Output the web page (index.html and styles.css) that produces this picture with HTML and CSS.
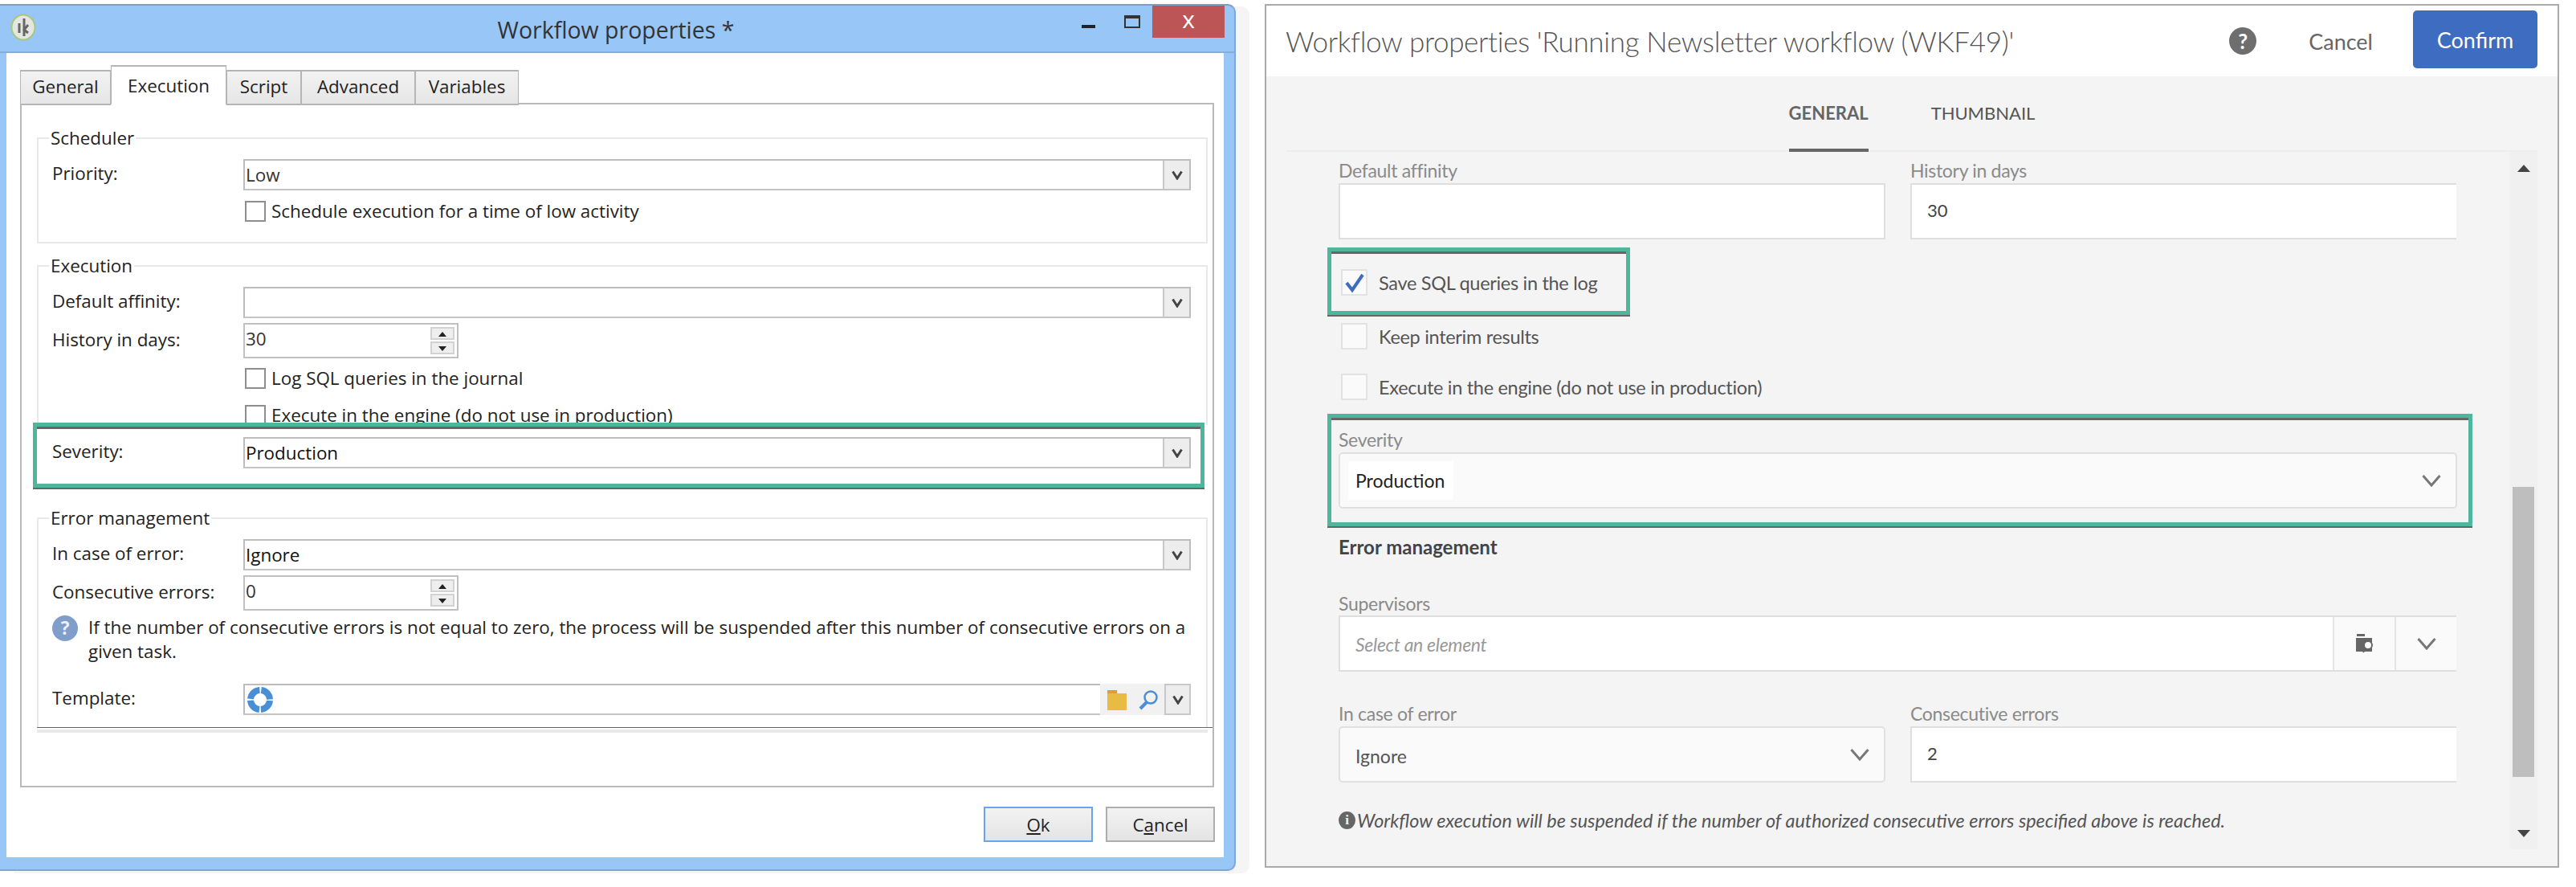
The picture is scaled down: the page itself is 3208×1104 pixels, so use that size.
FILE: index.html
```html
<!DOCTYPE html>
<html lang="en">
<head>
    <meta charset="UTF-8">
    <title>Workflow properties</title>
    <link rel="stylesheet" href="styles.css">
</head>
<body>
    <div class="win">
        <div class="titlebar">
            <div class="app-icon">
                <svg width="32" height="34" viewBox="0 0 32 34"><ellipse cx="16" cy="17" rx="14.5" ry="15.5" fill="#e4e6e2" stroke="#a9c77d" stroke-width="2"/><path d="M17 6v22M11 12v12M22 14l-5 6 5 4" fill="none" stroke="#666" stroke-width="3"/></svg>
            </div>
            <div class="win-title">Workflow properties *</div>
            <div class="win-controls">
                <span class="ctl-min"></span>
                <span class="ctl-max"></span>
                <span class="ctl-close">x</span>
            </div>
        </div>
        <div class="client">
            <div class="tabs">
                <div class="tab">General</div>
                <div class="tab tab-on">Execution</div>
                <div class="tab">Script</div>
                <div class="tab">Advanced</div>
                <div class="tab">Variables</div>
            </div>
            <div class="pane">
                <fieldset class="group">
                    <legend>Scheduler</legend>
                    <div class="row">
                        <label>Priority:</label>
                        <div class="combo"><span class="combo-val">Low</span><span class="combo-btn"><svg class="chev" viewBox="0 0 14 12"><path d="M1.5 1.5L7 10l5.5-8.5" /></svg></span></div>
                    </div>
                    <div class="check-row"><span class="box"></span>Schedule execution for a time of low activity</div>
                </fieldset>
                <fieldset class="group group-exec">
                    <legend>Execution</legend>
                    <div class="row">
                        <label>Default affinity:</label>
                        <div class="combo"><span class="combo-val"></span><span class="combo-btn"><svg class="chev" viewBox="0 0 14 12"><path d="M1.5 1.5L7 10l5.5-8.5" /></svg></span></div>
                    </div>
                    <div class="row row-spin">
                        <label>History in days:</label>
                        <div class="spin"><span class="spin-val">30</span><span class="spin-btns"><i class="up"></i><i class="down"></i></span></div>
                    </div>
                    <div class="check-row"><span class="box"></span>Log SQL queries in the journal</div>
                    <div class="check-row check-cut"><span class="box"></span>Execute in the engine (do not use in production)</div>
                </fieldset>
                <div class="mark mark-left">
                    <div class="row">
                        <label>Severity:</label>
                        <div class="combo"><span class="combo-val val-dark">Production</span><span class="combo-btn"><svg class="chev" viewBox="0 0 14 12"><path d="M1.5 1.5L7 10l5.5-8.5" /></svg></span></div>
                    </div>
                </div>
                <fieldset class="group group-err">
                    <legend>Error management</legend>
                    <div class="row">
                        <label>In case of error:</label>
                        <div class="combo"><span class="combo-val val-dark">Ignore</span><span class="combo-btn"><svg class="chev" viewBox="0 0 14 12"><path d="M1.5 1.5L7 10l5.5-8.5" /></svg></span></div>
                    </div>
                    <div class="row row-spin">
                        <label>Consecutive errors:</label>
                        <div class="spin"><span class="spin-val">0</span><span class="spin-btns"><i class="up"></i><i class="down"></i></span></div>
                    </div>
                    <div class="info">
                        <span class="info-icon">?</span>
                        <p>If the number of consecutive errors is not equal to zero, the process will be suspended after this number of consecutive errors on a given task.</p>
                    </div>
                    <div class="row row-template">
                        <label>Template:</label>
                        <div class="combo">
                            <span class="combo-val template-val">
                                <svg width="34" height="34" viewBox="0 0 34 34"><circle cx="17" cy="17" r="12" fill="none" stroke="#4a8fd6" stroke-width="8" stroke-dasharray="16.85 2" stroke-dashoffset="-1"/></svg>
                            </span>
                            <span class="template-tools">
                                <svg width="26" height="26" viewBox="0 0 26 26"><path d="M1 1h12v5H1z" fill="#e39a3c"/><path d="M1 5h24v21H1z" fill="#e8bb45"/></svg>
                                <svg width="26" height="26" viewBox="0 0 26 26"><circle cx="16" cy="10" r="7.5" fill="none" stroke="#4a8fd6" stroke-width="2.5"/><path d="M11 16L3 24" stroke="#4a8fd6" stroke-width="4"/></svg>
                            </span>
                            <span class="combo-btn"><svg class="chev" viewBox="0 0 14 12"><path d="M1.5 1.5L7 10l5.5-8.5" /></svg></span>
                        </div>
                    </div>
                </fieldset>
                <div class="cut-line"></div>
                <div class="cut-shade"></div>
            </div>
            <div class="dlg-buttons">
                <button class="btn btn-def"><u>O</u>k</button>
                <button class="btn">C<u>a</u>ncel</button>
            </div>
        </div>
    </div>

    <div class="panel">
        <div class="panel-head">
            <div class="panel-title">Workflow properties 'Running Newsletter workflow (WKF49)'</div>
            <span class="help">?</span>
            <span class="head-cancel">Cancel</span>
            <button class="confirm">Confirm</button>
        </div>
        <div class="panel-tabs">
            <div class="ptab ptab-on">GENERAL</div>
            <div class="ptab">THUMBNAIL</div>
        </div>
        <div class="panel-body">
            <div class="form">
                <div class="cols">
                    <div>
                        <div class="flabel">Default affinity</div>
                        <div class="input"></div>
                    </div>
                    <div>
                        <div class="flabel">History in days</div>
                        <div class="input input-open">30</div>
                    </div>
                </div>
                <div class="mark mark-sql">
                    <div class="pcheck"><span class="pbox pbox-on"><svg width="26" height="26" viewBox="0 0 26 26"><path d="M3 13l7 9L23 3" fill="none" stroke="#3d6cc0" stroke-width="4"/></svg></span>Save SQL queries in the log</div>
                </div>
                <div class="pcheck pcheck-keep"><span class="pbox"></span>Keep interim results</div>
                <div class="pcheck pcheck-exec"><span class="pbox"></span>Execute in the engine (do not use in production)</div>
                <div class="mark mark-sev">
                    <div class="flabel">Severity</div>
                    <div class="pselect">
                        <span class="pselect-val">Production</span>
                        <svg class="pchev" viewBox="0 0 24 16"><path d="M1.5 2L12 14 22.5 2"/></svg>
                    </div>
                </div>
                <div class="err-title">Error management</div>
                <div class="flabel label-sup">Supervisors</div>
                <div class="input lookup">
                    <span class="placeholder">Select an element</span>
                    <span class="lookup-btn">
                        <svg width="26" height="26" viewBox="0 0 26 26"><path d="M3 1h10v3H3z" fill="#666"/><path d="M2 6h20v17H2z" fill="#666"/><circle cx="17" cy="15" r="5" fill="#fafafa" stroke="#666" stroke-width="2"/><path d="M14 19l-3 5" stroke="#666" stroke-width="2"/></svg>
                    </span>
                    <span class="lookup-btn lookup-chev"><svg class="pchev" viewBox="0 0 24 16"><path d="M1.5 2L12 14 22.5 2"/></svg></span>
                </div>
                <div class="cols cols-err">
                    <div>
                        <div class="flabel">In case of error</div>
                        <div class="pselect"><span class="ignore">Ignore</span><svg class="pchev" viewBox="0 0 24 16"><path d="M1.5 2L12 14 22.5 2"/></svg></div>
                    </div>
                    <div>
                        <div class="flabel">Consecutive errors</div>
                        <div class="input input-open">2</div>
                    </div>
                </div>
                <div class="note"><span class="note-icon">i</span><em>Workflow execution will be suspended if the number of authorized consecutive errors specified above is reached.</em></div>
            </div>
            <div class="scrollbar">
                <span class="arrow-up"></span>
                <span class="thumb"></span>
                <span class="arrow-down"></span>
            </div>
        </div>
    </div>
</body>
</html>
```

FILE: styles.css
```css
* {
    box-sizing: border-box;
}
html, body {
    margin: 0;
    height: 1104px;
    overflow: hidden;
}
body {
    display: flex;
    align-items: flex-start;
    background: #fff;
    font-family: "Open Sans", sans-serif;
}

/* left: windows dialog */
.win {
    width: 1539px;
    height: 1079px;
    margin-top: 5px;
    background: #98c6f6;
    border-top: 2px solid #7d9cc0;
    border-right: 2px solid #7fa6d6;
    border-bottom: 2px solid #7fa6d6;
    border-top-right-radius: 10px;
    border-bottom-right-radius: 10px;
    display: flex;
    flex-direction: column;
    box-shadow: 17px 3px 0 #f5f5f5;
    font-size: 22.4px;
    color: #222;
}
.titlebar {
    height: 59px;
    flex: none;
    display: grid;
    grid-template-columns: 1fr auto 1fr;
    border-bottom: 2px solid #85aede;
}
.app-icon {
    padding: 10px 0 0 13px;
}
.win-title {
    font-size: 28.5px;
    line-height: 56px;
    color: #333;
    padding: 2px 3px 0 0;
}
.win-controls {
    display: flex;
    justify-content: flex-end;
    align-items: flex-start;
    padding-right: 12px;
}
.ctl-min {
    width: 17px;
    height: 4px;
    background: #222;
    margin-top: 24px;
}
.ctl-max {
    width: 20px;
    height: 16px;
    border: 2px solid #333;
    border-top-width: 4px;
    margin: 12px 15px 0 36px;
}
.ctl-close {
    width: 90px;
    height: 40px;
    background: #bc5656;
    color: #fff;
    font-size: 30px;
    line-height: 34px;
    text-align: center;
}
.client {
    flex: 1;
    margin: 0 13px 15px 8px;
    padding: 16px 11px 17px 17px;
    background: #fff;
    display: flex;
    flex-direction: column;
}
.tabs {
    display: grid;
    grid-template-columns: 113px 144px 93px 142px 129px;
    height: 48px;
    align-items: end;
    margin-bottom: -2px;
    position: relative;
}
.tab {
    height: 44px;
    line-height: 38px;
    text-align: center;
    background: linear-gradient(#f2f2f2, #e6e6e6);
    border: 2px solid #b5b5b5;
    border-left-width: 1px;
    border-right-width: 1px;
}
.tab-on {
    height: 50px;
    background: #fff;
    border-bottom-color: #fff;
    margin-top: -1px;
    line-height: 48px;
}
.pane {
    height: 852px;
    border: 2px solid #b9b9b9;
    margin-right: 1px;
    padding: 28px 6px 0 19px;
}
.group {
    margin: 0;
    padding: 12px 19px 25px 17px;
    border: 2px solid #e8e8e8;
    min-width: 0;
}
.group legend {
    padding: 0 2px;
    margin-left: -4px;
    line-height: 28px;
}
.group-exec {
    margin-top: 14px;
    padding-bottom: 0;
    height: 212px;
    border-bottom: none;
}
.group-err {
    margin-top: 24px;
    padding-top: 12px;
    padding-bottom: 15px;
    border-bottom: none;
}
.row {
    display: flex;
    align-items: center;
}
.row label {
    width: 238px;
    flex: none;
    margin-top: -4px;
}
.combo {
    flex: 1;
    height: 39px;
    display: flex;
    border: 2px solid #bdbdc0;
    border-bottom-color: #c4c4c4;
    background: #fff;
}
.combo-val {
    flex: 1;
    line-height: 36px;
    color: #333;
    padding-left: 1px;
}
.val-dark {
    color: #111;
}
.combo-btn {
    width: 33px;
    background: #ededed;
    border-left: 2px solid #c8c8c8;
    display: flex;
    align-items: center;
    justify-content: center;
}
.chev {
    width: 14px;
    height: 12px;
    fill: none;
    stroke: #444;
    stroke-width: 3;
}
.row-spin {
    margin-top: 6px;
}
.spin {
    width: 268px;
    height: 44px;
    border: 2px solid #c0c0c2;
    display: flex;
    justify-content: space-between;
    padding-right: 3px;
}
.spin-val {
    line-height: 36px;
    color: #333;
    padding-left: 1px;
}
.spin-btns {
    width: 30px;
    display: flex;
    flex-direction: column;
    gap: 2px;
    padding: 3px 0;
}
.spin-btns i {
    flex: 1;
    background: #eee;
    border: 2px solid #d2d2d2;
    position: relative;
}
.spin-btns i::after {
    content: "";
    position: absolute;
    left: 8px;
    top: 4px;
    border-left: 5px solid transparent;
    border-right: 5px solid transparent;
}
.spin-btns .up::after {
    border-bottom: 6px solid #222;
}
.spin-btns .down::after {
    border-top: 6px solid #222;
}
.check-row {
    display: flex;
    align-items: center;
    margin: 13px 0 0 240px;
    height: 26px;
    line-height: 26px;
    white-space: nowrap;
}
.group-exec .check-row {
    margin-top: 12px;
}
.group-exec .check-cut {
    margin-top: 20px;
}
.box {
    width: 26px;
    height: 26px;
    flex: none;
    border: 2px solid #8e8e8e;
    margin-right: 7px;
    background: #fff;
}
.mark {
    border: 5px solid #4fb69e;
    box-shadow: inset 0 3px 0 #666, 0 2px 0 #666;
    position: relative;
}
.mark-left {
    margin: -3px 4px 0 -5px;
    padding: 13px 12px 19px 19px;
    background: #fff;
}
.info {
    display: flex;
    margin-top: 6px;
    line-height: 30px;
    gap: 13px;
}
.info-icon {
    width: 32px;
    height: 32px;
    flex: none;
    border-radius: 50%;
    background: #7f9ec9;
    color: #eef2f8;
    font-weight: 700;
    text-align: center;
    line-height: 32px;
}
.info p {
    margin: 0;
}
.row-template {
    margin-top: 25px;
}
.template-val {
    display: flex;
    align-items: center;
    padding-left: 2px;
}
.template-tools {
    width: 80px;
    margin: -2px 0;
    background: #f1f1f1;
    display: flex;
    align-items: center;
    justify-content: center;
    gap: 13px;
}
.row-template .combo {
    border-right: none;
}
.row-template .combo-btn {
    border: 2px solid #c8c8c8;
    margin: -2px 0;
}
.cut-line {
    height: 1px;
    background: #666;
    margin-right: -6px;
}
.cut-shade {
    height: 4px;
    margin-top: 2px;
    background: #e9e9e9;
}
.dlg-buttons {
    margin-top: 24px;
    display: flex;
    justify-content: flex-end;
    gap: 16px;
}
.btn {
    width: 136px;
    height: 44px;
    font: inherit;
    color: #222;
    background: linear-gradient(#f2f2f2, #e4e4e4);
    border: 2px solid #adadad;
    padding: 0;
}
.btn-def {
    border-color: #65a5ee;
}

/* right: web dialog */
.panel {
    width: 1612px;
    height: 1075px;
    margin: 5px 0 0 36px;
    border: 2px solid #aaa;
    background: #f4f4f4;
    display: flex;
    flex-direction: column;
    font-family: "Lato", sans-serif;
    color: #444;
}
.panel-head {
    height: 88px;
    flex: none;
    background: #fff;
    display: flex;
    align-items: center;
    padding: 0 25px 0 24px;
}
.panel-title {
    flex: 1;
    font-size: 35px;
    font-weight: 300;
    color: #555;
    letter-spacing: -0.33px;
}
.help {
    width: 34px;
    height: 34px;
    border-radius: 50%;
    background: #6e6e6e;
    color: #fff;
    font-size: 26px;
    font-weight: 700;
    line-height: 34px;
    text-align: center;
    margin-right: 65px;
}
.head-cancel {
    font-size: 27px;
    color: #666;
    margin-right: 50px;
}
.confirm {
    width: 155px;
    height: 72px;
    background: #3d6cc0;
    color: #fff;
    font: 27px "Lato", sans-serif;
    border: none;
    border-radius: 5px;
    margin-top: -4px;
    padding: 0;
}
.panel-tabs {
    height: 94px;
    flex: none;
    margin: 0 25px;
    border-bottom: 2px solid #ededed;
    display: flex;
    justify-content: center;
    gap: 78px;
    font-size: 22px;
    color: #555;
}
.ptab {
    line-height: 92px;
    height: 94px;
}
.ptab-on {
    font-weight: 700;
    color: #666;
    border-bottom: 4px solid #666;
}
.panel-body {
    flex: 1;
    display: flex;
    min-height: 0;
}
.form {
    flex: 1;
    padding: 11px 0 0 90px;
    overflow: hidden;
}
.cols {
    display: grid;
    grid-template-columns: 681px 680px;
    gap: 31px;
}
.flabel {
    font-size: 23px;
    line-height: 24px;
    color: #8a8a8a;
    margin-bottom: 4px;
    letter-spacing: -0.3px;
}
.input {
    height: 70px;
    background: #fff;
    border: 2px solid #dedede;
    font-size: 22px;
    line-height: 66px;
    padding-left: 19px;
    color: #444;
}
.input-open {
    border-right: none;
    line-height: 64px;
}
.mark-sql {
    width: 377px;
    margin: 10px 0 0 -14px;
    padding: 22px 0 19px 12px;
}
.mark-sev {
    width: 1426px;
    margin: 17px 0 0 -14px;
    padding: 15px 14px 17px 9px;
}
.pcheck {
    display: flex;
    align-items: center;
    height: 33px;
    font-size: 23.5px;
    color: #555;
    white-space: nowrap;
    letter-spacing: -0.3px;
}
.pcheck-keep {
    margin: 10px 0 0 3px;
}
.pcheck-exec {
    margin: 30px 0 0 3px;
}
.pbox {
    width: 33px;
    height: 33px;
    flex: none;
    margin-right: 14px;
    background: #fafafa;
    border: 2px solid #e2e2e2;
    display: flex;
    align-items: center;
    justify-content: center;
}
.pselect {
    height: 70px;
    background: #fafafa;
    border: 2px solid #e0e0e0;
    border-radius: 5px;
    display: flex;
    align-items: center;
    justify-content: space-between;
    padding: 0 18px 0 10px;
    font-size: 23px;
    color: #222;
}
.pselect-val {
    background: #fff;
    padding: 0 11px 0 9px;
    line-height: 48px;
}
.ignore {
    padding: 4px 0 0 9px;
    color: #555;
}
.pchev {
    width: 24px;
    height: 16px;
    fill: none;
    stroke: #777;
    stroke-width: 3;
}
.err-title {
    margin-top: 14px;
    font-size: 24px;
    line-height: 24px;
    font-weight: 700;
    color: #444;
}
.label-sup {
    margin-top: 46px;
    margin-bottom: 3px;
}
.lookup {
    width: 1392px;
    display: flex;
    padding: 0 0 0 19px;
    border-right: none;
    line-height: 68px;
}
.placeholder {
    flex: 1;
    font-size: 23px;
    font-style: italic;
    color: #999;
    letter-spacing: -0.3px;
}
.lookup-btn {
    width: 77px;
    background: #fafafa;
    border-left: 2px solid #e4e4e4;
    display: flex;
    align-items: center;
    justify-content: center;
}
.cols-err {
    margin-top: 40px;
}
.note {
    margin-top: 33px;
    display: flex;
    align-items: center;
    gap: 2px;
    font-size: 23.4px;
    color: #555;
    white-space: nowrap;
}
.note-icon {
    width: 21px;
    height: 22px;
    flex: none;
    border-radius: 50%;
    background: #666;
    color: #f4f4f4;
    font: 700 17px/22px "Liberation Serif", serif;
    text-align: center;
}
.scrollbar {
    width: 35px;
    height: 868px;
    flex: none;
    margin-right: 25px;
    background: #f0f0f0;
    display: flex;
    flex-direction: column;
    align-items: center;
    position: relative;
}
.arrow-up {
    margin-top: 16px;
    border-left: 8px solid transparent;
    border-right: 8px solid transparent;
    border-bottom: 9px solid #444;
}
.thumb {
    width: 27px;
    height: 361px;
    margin-top: 392px;
    background: #bebebe;
}
.arrow-down {
    margin-top: 66px;
    border-left: 8px solid transparent;
    border-right: 8px solid transparent;
    border-top: 9px solid #444;
}
```
